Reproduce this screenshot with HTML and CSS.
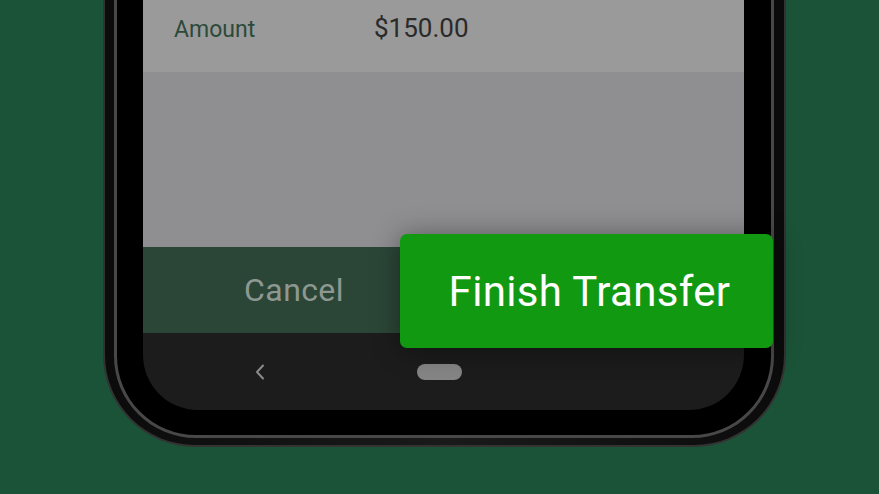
FILE: index.html
```html
<!DOCTYPE html>
<html lang="en">
<head>
    <meta charset="UTF-8">
    <meta name="viewport" content="width=device-width, initial-scale=1.0">
    <title>Finish Transfer</title>
    <link rel="stylesheet" href="styles.css">
</head>
<body>
    <div class="phone">
        <div class="phone-shell">
            <div class="phone-edge">
                <div class="phone-bezel">
                    <div class="screen">
                        <div class="amount-row">
                            <span class="amount-label">Amount</span>
                            <span class="amount-value">$150.00</span>
                        </div>
                        <div class="filler"></div>
                        <div class="action-bar">
                            <div class="cancel">Cancel</div>
                            <button class="finish">Finish Transfer</button>
                        </div>
                        <div class="nav-bar">
                            <svg class="nav-back" width="10" height="16" viewBox="0 0 10 16">
                                <polyline points="8,1.5 2,8 8,14.5" fill="none" stroke="#8a8a8a" stroke-width="2" stroke-linecap="round" stroke-linejoin="round"/>
                            </svg>
                            <div class="nav-home"></div>
                        </div>
                    </div>
                </div>
            </div>
        </div>
    </div>
</body>
</html>
```

FILE: styles.css
```css
body {
    margin: 0;
    background-color: #1b5338;
    font-family: Roboto, "Liberation Sans", sans-serif;
    height: 494px;
    overflow: hidden;
}
/* phone frame, top is cut off by the window */
.phone {
    margin-left: 103px;
    width: 683px;
    height: 447px;
    box-sizing: border-box;
    background-color: #333;
    border-radius: 0 0 92px 92px;
    padding: 0 2px 2px;
}
.phone-shell {
    height: 100%;
    box-sizing: border-box;
    background: linear-gradient(90deg, #0b0b0b, #1a1a1a 50%, #0b0b0b);
    border-radius: 0 0 90px 90px;
    padding: 0 10px 7px 9px;
}
.phone-edge {
    height: 100%;
    box-sizing: border-box;
    background-color: #484848;
    border-radius: 0 0 82px 82px;
    padding: 0 3px 3px;
}
.phone-bezel {
    height: 100%;
    box-sizing: border-box;
    background-color: #000;
    border-radius: 0 0 79px 79px;
    padding: 0 27px 25px 26px;
}
.screen {
    display: flex;
    flex-direction: column;
    height: 100%;
}
.amount-row {
    height: 72px;
    box-sizing: border-box;
    background-color: #9a9a9a;
    display: flex;
    align-items: baseline;
    padding: 13px 0 0 31px;
}
.amount-label {
    width: 200px;
    font-size: 23px;
    color: #2c4a3a;
}
.amount-value {
    font-size: 26px;
    color: #2a2a2a;
}
.filler {
    flex: 1;
    background-color: #8f8e91;
}
.action-bar {
    position: relative;
    height: 86px;
    background-color: #2b4637;
    display: flex;
    align-items: center;
}
.cancel {
    width: 302px;
    text-align: center;
    font-size: 32px;
    letter-spacing: 0.4px;
    color: #8e9892;
}
.finish {
    position: absolute;
    left: 257px;
    top: -13px;
    width: 373px;
    height: 114px;
    border: none;
    border-radius: 7px;
    background-color: #129912;
    color: #fff;
    font-family: Roboto, "Liberation Sans", sans-serif;
    font-size: 42px;
    letter-spacing: 0.35px;
    padding: 0 0 0 6px;
    box-shadow: 0 2px 28px rgba(0, 0, 0, 0.4);
    cursor: pointer;
}
.nav-bar {
    height: 77px;
    background-color: #1c1c1c;
    border-radius: 0 0 55px 55px;
    display: flex;
    align-items: center;
    padding-left: 112px;
    gap: 152px;
}
.nav-home {
    width: 45px;
    height: 16px;
    border-radius: 8px;
    background-color: #858585;
}
```
